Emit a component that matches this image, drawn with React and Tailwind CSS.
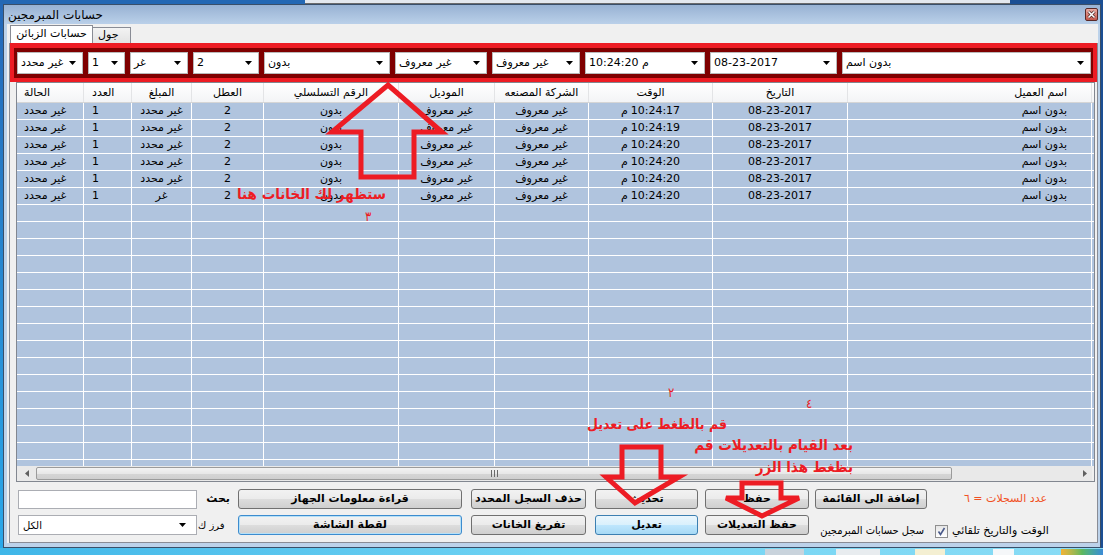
import React from 'react'

// columns of the grid, left to right as drawn (RTL grid mirrored)
const cols = [
  { title: 'الحالة', cell: 'justify-start pl-[7px]' },
  { title: 'العدد', cell: 'justify-start pl-[8px]' },
  { title: 'المبلغ', cell: 'justify-center' },
  { title: 'العطل', cell: 'justify-center' },
  { title: 'الرقم التسلسلي', cell: 'justify-center' },
  { title: 'الموديل', cell: 'justify-center' },
  { title: 'الشركة المصنعه', cell: 'justify-center' },
  { title: 'الوقت', cell: 'justify-center' },
  { title: 'التاريخ', cell: 'justify-center' },
  { title: 'اسم العميل', cell: 'justify-end pr-[24px]' },
]

const gridCols = 'grid grid-cols-[67px_48px_60px_72px_135px_96px_94px_124px_135px_244px]'

const records = [
  { time: '10:24:17', price: 'غير محدد' },
  { time: '10:24:19', price: 'غير محدد' },
  { time: '10:24:20', price: 'غير محدد' },
  { time: '10:24:20', price: 'غير محدد' },
  { time: '10:24:20', price: 'غير محدد' },
  { time: '10:24:20', price: 'غر' },
]

function cellsFor(r) {
  return [
    'غير محدد',
    '1',
    r.price,
    '2',
    'بدون',
    'غير معروف',
    'غير معروف',
    <span className="flex gap-[3px]"><span>م</span><span>{r.time}</span></span>,
    '08-23-2017',
    'بدون اسم',
  ]
}

const DownTri = () => (
  <svg width="7" height="4" viewBox="0 0 7 4"><path d="M0 0h7L3.5 4z" fill="#000" /></svg>
)

function Combo({ text, className = '' }) {
  return (
    <div className={'h-[22px] flex items-center justify-between bg-white border border-[#b9b9b9] pl-[3px] pr-[6px] ' + className}>
      <span className="text-[11px] whitespace-nowrap">{text}</span>
      <DownTri />
    </div>
  )
}

function Btn({ children, className = '', look = 'plain' }) {
  let skin = 'border-[#707070] bg-[linear-gradient(#f2f2f2_0%,#ebebeb_50%,#dddddd_51%,#cfcfcf_100%)]'
  if (look === 'hot') skin = 'border-[#3c7fb1] bg-[linear-gradient(#eaf6fd_0%,#d9f0fc_50%,#bee6fd_51%,#a7d9f5_100%)]'
  if (look === 'def') skin = 'border-[#3c8ccf] bg-[linear-gradient(#f2f2f2_0%,#ebebeb_50%,#dddddd_51%,#cfcfcf_100%)] shadow-[inset_0_0_0_1px_#b6e0f7]'
  return (
    <div className={'h-[20px] flex items-center justify-center rounded-[3px] border text-[11px] font-bold whitespace-nowrap ' + skin + ' ' + className}>
      {children}
    </div>
  )
}

function DataGrid() {
  const empty = Array.from({ length: 16 })
  return (
    <div className="ml-[6px] w-[1079px] h-[400px] border border-[#828790] bg-[#f0f0f0] flex flex-col">
      <div className={gridCols + ' h-[20px] border-b border-[#d5d5d5] bg-linear-to-b from-white to-[#f3f4f6]'}>
        {cols.map((c, i) => (
          <div key={i} className={'flex items-center pt-[1px] text-[11px] whitespace-nowrap overflow-hidden border-r border-[#e3e4e6] ' + c.cell}>
            {c.title}
          </div>
        ))}
      </div>
      <div className="h-[363px] overflow-hidden bg-[#b0c4de]">
        {records.map((r, ri) => (
          <div key={ri} className={gridCols + ' h-[17px] border-b border-white'}>
            {cellsFor(r).map((v, i) => (
              <div key={i} className={'flex items-center pt-[1px] text-[11px] whitespace-nowrap overflow-hidden border-r border-white ' + cols[i].cell}>
                {v}
              </div>
            ))}
          </div>
        ))}
        {empty.map((_, ri) => (
          <div key={'e' + ri} className={gridCols + ' h-[17px] border-b border-white'}>
            {cols.map((c, i) => (
              <div key={i} className="border-r border-white" />
            ))}
          </div>
        ))}
      </div>
      {/* horizontal scrollbar */}
      <div className="h-[15px] w-[1075px] flex bg-[#e9e9e9]">
        <div className="w-[19px] flex items-center justify-center">
          <svg width="4" height="7" viewBox="0 0 4 7"><path d="M4 0v7L0 3.5z" fill="#606060" /></svg>
        </div>
        <div className="w-[916px] my-[1px] rounded-[2px] border border-[#9b9b9b] bg-[linear-gradient(#f3f3f3_0%,#e8e8e8_50%,#d6d6d6_51%,#cfcfcf_100%)] flex items-center justify-center gap-[2px]">
          <div className="w-[1px] h-[7px] bg-[#6a6a6a]" />
          <div className="w-[1px] h-[7px] bg-[#6a6a6a]" />
          <div className="w-[1px] h-[7px] bg-[#6a6a6a]" />
        </div>
        <div className="flex-1" />
        <div className="w-[15px] flex items-center justify-center">
          <svg width="4" height="7" viewBox="0 0 4 7"><path d="M0 0v7L4 3.5z" fill="#606060" /></svg>
        </div>
      </div>
    </div>
  )
}

function Controls() {
  return (
    <div className="pt-[7px] flex flex-col gap-[6px]">
      <div className="flex items-center h-[20px]">
        <div className="ml-[8px] w-[179px] h-[19px] bg-white border border-[#abadb3]" />
        <div className="w-[41px] text-right pr-[8px] text-[11px] font-bold">بحث</div>
        <Btn className="w-[224px]">قراءة معلومات الجهاز</Btn>
        <Btn className="ml-[9px] w-[115px]">حذف السجل المحدد</Btn>
        <Btn className="ml-[9px] w-[103px]">تحديث</Btn>
        <Btn className="ml-[7px] w-[104px]">حفظ</Btn>
        <Btn className="ml-[6px] w-[112px]">إضافة الى القائمة</Btn>
        <div className="w-[120px] text-right text-[11px] text-[#f05023]" dir="rtl">عدد السجلات = ٦</div>
      </div>
      <div className="flex items-start h-[20px]">
        <div className="ml-[8px] w-[179px] h-[20px] bg-white border border-[#abadb3] flex items-center justify-between pl-[4px] pr-[10px]">
          <span className="text-[10px]">الكل</span>
          <DownTri />
        </div>
        <div className="w-[41px] pl-[1px] h-[20px] flex items-center text-[10px]">فرز ك</div>
        <Btn className="w-[224px]" look="def">لقطة الشاشة</Btn>
        <Btn className="ml-[9px] w-[115px]">تفريغ الخانات</Btn>
        <Btn className="ml-[9px] w-[103px]" look="hot">تعديل</Btn>
        <Btn className="ml-[7px] w-[104px]">حفظ التعديلات</Btn>
        <div className="mt-[6px] h-[20px] flex items-center">
          <div className="ml-[16px] w-[99px] flex justify-end">
            <span className="text-[11px] whitespace-nowrap font-['DejaVu_Sans_Condensed','DejaVu_Sans',sans-serif]">سجل حسابات المبرمجين</span>
          </div>
          <div className="ml-[11px] w-[13px] h-[13px] border border-[#8f8f8f] bg-linear-to-b from-[#e6e6e6] to-white flex items-center justify-center">
            <svg width="9" height="9" viewBox="0 0 9 9"><path d="M1.5 4.5l2 3 4-6.5" fill="none" stroke="#4a5a8a" strokeWidth="1.6" /></svg>
          </div>
          <span className="ml-[4px] text-[11px] whitespace-nowrap">الوقت والتاريخ تلقائي</span>
        </div>
      </div>
    </div>
  )
}

function Window() {
  const combos = [
    { t: 'غير محدد', w: 'w-[66px]' },
    { t: '1', w: 'w-[37px]' },
    { t: 'غر', w: 'w-[58px]' },
    { t: '2', w: 'w-[66px]' },
    { t: 'بدون', w: 'w-[126px]' },
    { t: 'غير معروف', w: 'w-[92px]' },
    { t: 'غير معروف', w: 'w-[88px]' },
    { t: '10:24:20 م', w: 'w-[120px]' },
    { t: '08-23-2017', w: 'w-[127px]' },
    { t: 'بدون اسم', w: 'flex-1' },
  ]
  return (
    <div className="w-[1098px] flex flex-col border border-[#3a4f69] bg-[#bcd2ea]">
      {/* title bar */}
      <div className="h-[19px] flex items-center justify-between pl-[4px] pr-[2px] bg-linear-to-b from-[#98b2d3] to-[#bad0e9]">
        <span className="text-[12px]">حسابات المبرمجين</span>
        <div className="w-[13px] h-[13px] rounded-[2px] border border-[#5a2a27] bg-linear-to-b from-[#e9aaa2] to-[#c4564b] flex items-center justify-center">
          <svg width="9" height="9" viewBox="0 0 9 9">
            <path d="M1.5 1.5l6 6M7.5 1.5l-6 6" stroke="#4a2020" strokeWidth="3" />
            <path d="M1.5 1.5l6 6M7.5 1.5l-6 6" stroke="#fff" strokeWidth="1.6" />
          </svg>
        </div>
      </div>
      <div className="flex-1 flex flex-col pl-[3px] pr-[2px] pb-[4px]">
        <div className="flex-1 flex flex-col bg-[#f0f0f0]">
          {/* tabs */}
          <div className="h-[19px] flex items-end pl-[3px]">
            <div className="w-[83px] h-[18px] bg-white border border-b-0 border-[#898c95] flex items-center justify-center text-[11px]">حسابات الزبائن</div>
            <div className="w-[38px] h-[16px] border border-l-0 border-b-0 border-[#898c95] bg-linear-to-b from-[#f3f3f3] to-[#e3e3e3] flex items-center pl-[5px] text-[11px]">جول</div>
          </div>
          {/* tab page */}
          <div className="ml-[2px] flex-1 flex flex-col border-x border-b border-[#898c95]">
            <div className="h-[39px] border-[4px] border-t-[5px] border-[#ed1c24] bg-[#7f0000] pl-[3px] pr-[2px] pt-[4px] flex gap-[5px]">
              {combos.map((c, i) => <Combo key={i} text={c.t} className={c.w} />)}
            </div>
            <DataGrid />
            <Controls />
          </div>
        </div>
      </div>
    </div>
  )
}

function Notes() {
  const red = "absolute whitespace-nowrap text-[#ed1c24] font-bold font-['DejaVu_Sans_Condensed','DejaVu_Sans',sans-serif]"
  return (
    <>
      <svg className="absolute inset-0 pointer-events-none" width="1103" height="555" viewBox="0 0 1103 555">
        <polygon points="388,85 442,132 414,132 414,177 361,177 361,132 332,132" fill="none" stroke="#ed1c24" strokeWidth="5" />
        <polygon points="622,447 661,447 661,477 679,477 635,503 606,477 622,477" fill="none" stroke="#ed1c24" strokeWidth="5" />
        <polygon points="742,483 781,483 781,498 799,498 762,516 726,498 742,498" fill="none" stroke="#ed1c24" strokeWidth="5" />
      </svg>
      <div className={red + ' left-[237px] top-[183px] w-[156px] flex justify-end text-[15px]'} dir="rtl">ستظهر لك الخانات هنا</div>
      <div className={red + ' left-[365px] top-[207px] text-[13px] font-normal'}>٣</div>
      <div className={red + ' left-[668px] top-[383px] text-[13px] font-normal'}>٢</div>
      <div className={red + ' left-[806px] top-[394px] text-[13px] font-normal'}>٤</div>
      <div className={red + ' left-[586px] top-[414px] w-[141px] flex justify-start text-[14px]'} dir="rtl">قم بالظغط على تعديل</div>
      <div className={red + ' left-[697px] top-[434px] w-[156px] flex justify-start text-[15px]'} dir="rtl">بعد القيام بالتعديلات قم</div>
      <div className={red + ' left-[755px] top-[456px] w-[98px] flex justify-start text-[15px]'} dir="rtl">بظغط هذا الزر</div>
    </>
  )
}

export default function App() {
  return (
    <div className="relative w-[1103px] h-[555px] overflow-hidden flex flex-col bg-[#2a8ad6] font-['DejaVu_Sans',sans-serif] text-black">
      <div className="h-[4px] flex">
        <div className="w-[305px] bg-[#2468b4]" />
        <div className="flex-1 bg-[#e4e8ee] border-b border-[#6b6b6b]" />
        <div className="w-[93px] bg-[#1b4f94]" />
      </div>
      <div className="h-[544px] flex">
        <div className="w-[3px] bg-linear-to-b from-[#2468b8] to-[#2aa8ea]" />
        <Window />
        <div className="flex-1 bg-[#1b4f94]" />
      </div>
      <div className="h-[7px] flex bg-linear-to-r from-[#3fb6e8] via-[#6fd3f3] to-[#8adcf5]">
        <div className="w-[765px]" />
        <div className="w-[39px] mt-[1px] bg-[#c9d3dc]" />
        <div className="ml-[32px] w-[44px] mt-[1px] bg-[#e8ecef]" />
        <div className="ml-[35px] w-[30px] mt-[1px] bg-[#f4efd2]" />
        <div className="ml-[48px] w-[21px] mt-[1px] bg-[#f5f7f9]" />
        <div className="ml-[47px] flex-1 mt-[1px] bg-linear-to-r from-[#f2b233] via-[#5cb85c] to-[#3c8ad6]" />
      </div>
      <Notes />
    </div>
  )
}
